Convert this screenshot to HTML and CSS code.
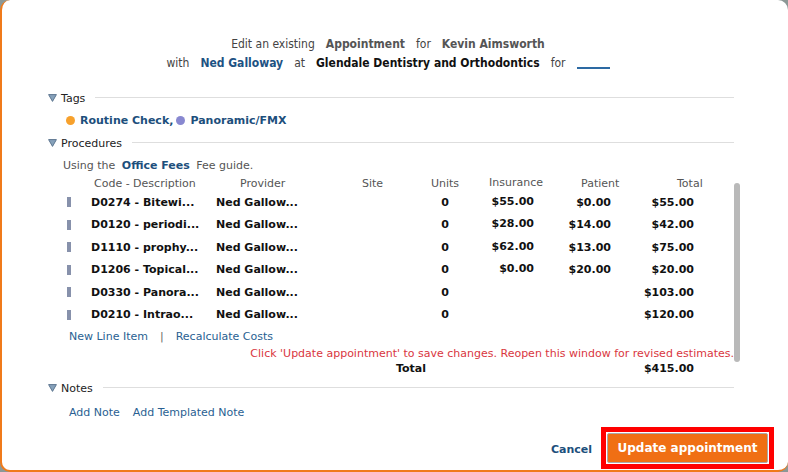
FILE: index.html
```
<!DOCTYPE html>
<html>
<head>
<meta charset="utf-8">
<link rel="stylesheet" href="styles.css">
</head>
<body>
<div class="dialog">
  <div class="title">
    <div class="tline">
      <span>Edit an existing</span>
      <span class="tb">Appointment</span>
      <span>for</span>
      <span class="tb">Kevin Aimsworth</span>
    </div>
    <div class="tline">
      <span>with</span>
      <span class="tb tlink">Ned Galloway</span>
      <span>at</span>
      <span class="tb tdark">Glendale Dentistry and Orthodontics</span>
      <span>for</span>
      <span class="blank"></span>
    </div>
  </div>

  <div class="content">
    <div class="sec-head sec-tags">
      <svg class="tri" width="9" height="8" viewBox="0 0 9 8"><polygon points="0.6,0.6 8.4,0.6 4.5,7.4" fill="#86a1ba" stroke="#5d7690" stroke-width="1" stroke-linejoin="round"/></svg>
      <span class="sec-label">Tags</span>
      <span class="rule"></span>
    </div>
    <div class="tags">
      <span class="dot orange"></span><span class="tag">Routine Check,</span>
      <span class="dot purple"></span><span class="tag">Panoramic/FMX</span>
    </div>

    <div class="sec-head sec-proc">
      <svg class="tri" width="9" height="8" viewBox="0 0 9 8"><polygon points="0.6,0.6 8.4,0.6 4.5,7.4" fill="#86a1ba" stroke="#5d7690" stroke-width="1" stroke-linejoin="round"/></svg>
      <span class="sec-label">Procedures</span>
      <span class="rule"></span>
    </div>
    <div class="using">Using the <span class="link-b">Office Fees</span> Fee guide.</div>

    <div class="grid">
      <div class="hd"></div>
      <div class="hd h-code">Code - Description</div>
      <div class="hd h-prov">Provider</div>
      <div class="hd h-site">Site</div>
      <div class="hd h-units">Units</div>
      <div class="hd h-ins">Insurance</div>
      <div class="hd h-pat">Patient</div>
      <div class="hd h-tot">Total</div>

      <div class="c"><span class="bar"></span></div><div class="c b">D0274 - Bitewi...</div><div class="c b">Ned Gallow...</div><div class="c"></div><div class="c b u">0</div><div class="c b r ins">$55.00</div><div class="c b r">$0.00</div><div class="c b r">$55.00</div>
      <div class="c"><span class="bar"></span></div><div class="c b">D0120 - periodi...</div><div class="c b">Ned Gallow...</div><div class="c"></div><div class="c b u">0</div><div class="c b r ins">$28.00</div><div class="c b r">$14.00</div><div class="c b r">$42.00</div>
      <div class="c"><span class="bar"></span></div><div class="c b">D1110 - prophy...</div><div class="c b">Ned Gallow...</div><div class="c"></div><div class="c b u">0</div><div class="c b r ins">$62.00</div><div class="c b r">$13.00</div><div class="c b r">$75.00</div>
      <div class="c"><span class="bar"></span></div><div class="c b">D1206 - Topical...</div><div class="c b">Ned Gallow...</div><div class="c"></div><div class="c b u">0</div><div class="c b r ins">$0.00</div><div class="c b r">$20.00</div><div class="c b r">$20.00</div>
      <div class="c"><span class="bar"></span></div><div class="c b">D0330 - Panora...</div><div class="c b">Ned Gallow...</div><div class="c"></div><div class="c b u">0</div><div class="c b r ins"></div><div class="c b r"></div><div class="c b r">$103.00</div>
      <div class="c"><span class="bar"></span></div><div class="c b">D0210 - Intrao...</div><div class="c b">Ned Gallow...</div><div class="c"></div><div class="c b u">0</div><div class="c b r ins"></div><div class="c b r"></div><div class="c b r">$120.00</div>
    </div>

    <div class="links"><span class="lnk">New Line Item</span><span class="sep">|</span><span class="lnk">Recalculate Costs</span></div>
    <div class="warn">Click 'Update appointment' to save changes. Reopen this window for revised estimates.</div>
    <div class="grid total-row">
      <div></div><div></div><div></div>
      <div class="b tot-label">Total</div>
      <div></div><div></div><div></div>
      <div class="b r">$415.00</div>
    </div>

    <div class="sec-head sec-notes">
      <svg class="tri" width="9" height="8" viewBox="0 0 9 8"><polygon points="0.6,0.6 8.4,0.6 4.5,7.4" fill="#86a1ba" stroke="#5d7690" stroke-width="1" stroke-linejoin="round"/></svg>
      <span class="sec-label">Notes</span>
      <span class="rule"></span>
    </div>
    <div class="notes"><span class="lnk">Add Note</span><span class="lnk">Add Templated Note</span></div>
  </div>

  <div class="footer">
    <span class="cancel">Cancel</span>
    <div class="highlight"><button class="primary">Update appointment</button></div>
  </div>

  <div class="scrollbar"></div>
</div>
</body>
</html>
```
FILE: styles.css
```
html, body {
  margin: 0;
  padding: 0;
  background: #8c9896;
}
body {
  width: 788px;
  height: 472px;
  overflow: hidden;
  font-family: "DejaVu Sans", Verdana, sans-serif;
  font-size: 11px;
  color: #222;
}
.dialog {
  position: relative;
  box-sizing: border-box;
  width: 788px;
  height: 472px;
  background: #fff;
  border-left: 2px solid #f07a1a;
  border-bottom: 2px solid #f07a1a;
  border-radius: 10px;
  display: flex;
  flex-direction: column;
}
.title {
  padding-top: 35px;
  padding-right: 14px;
  font-family: "DejaVu Sans Condensed", "DejaVu Sans", sans-serif;
  font-size: 12px;
  color: #444;
}
.tline {
  height: 19px;
  line-height: 19px;
  display: flex;
  justify-content: center;
  gap: 11px;
}
.tb { font-weight: bold; color: #555; }
.tlink { color: #1d5283; }
.tdark { color: #111; }
.blank {
  display: inline-block;
  width: 33px;
  height: 13px;
  border-bottom: 2px solid #2d6aa3;
}
.content {
  padding-left: 46px;
  padding-right: 54px;
  display: flex;
  flex-direction: column;
}
.sec-head {
  height: 16px;
  display: flex;
  align-items: center;
}
.sec-tags { margin-top: 17px; }
.sec-proc { margin-top: 7px; }
.sec-notes { margin-top: 3px; }
.tri { flex: none; margin-right: 4px; }
.sec-label { color: #222; font-size: 11px; }
.rule {
  flex: 1;
  height: 1px;
  background: #dedede;
  margin-left: 10px;
  margin-top: -1px;
}
.tags {
  margin-top: 6px;
  height: 16px;
  display: flex;
  align-items: center;
  padding-left: 18px;
}
.dot {
  width: 9px;
  height: 9px;
  border-radius: 50%;
  margin-right: 5px;
}
.orange { background: #f7a12c; }
.purple { background: #8888d0; margin-left: 3px; }
.tag { font-weight: bold; color: #1d4f7c; }
.using {
  margin-top: 7px;
  height: 16px;
  line-height: 16px;
  padding-left: 15px;
  color: #555;
}
.link-b { font-weight: bold; color: #1d4f7c; margin: 0 3px; }
.grid {
  margin-left: 15px;
  display: grid;
  grid-template-columns: 28px 125px 120px 80px 58px 66px 77px 83px;
  grid-template-rows: 17px;
  grid-auto-rows: 22.5px;
  width: 637px;
}
.hd {
  color: #555;
  padding-top: 3px;
  line-height: 14px;
  white-space: nowrap;
}
.h-code { padding-left: 3px; }
.h-prov { padding-left: 24px; }
.h-site { padding-left: 26px; }
.h-units { text-align: center; }
.h-ins { padding-left: 15px; padding-top: 2px; }
.h-pat { padding-left: 41px; }
.h-tot { padding-left: 60px; }
.c {
  display: flex;
  align-items: center;
  white-space: nowrap;
  color: #111;
}
.b { font-weight: bold; color: #111; }
.u { justify-content: center; }
.r { justify-content: flex-end; padding-right: 6px; text-align: right; }
.ins { padding-bottom: 2px; }
.bar {
  display: inline-block;
  width: 4px;
  height: 10px;
  background: #8791ab;
  margin-left: 4px;
}
.links {
  margin-top: 1px;
  height: 20px;
  line-height: 20px;
  padding-left: 21px;
  display: flex;
}
.lnk { color: #2a5f92; }
.sep { color: #666; margin: 0 12px; }
.warn {
  height: 14px;
  line-height: 14px;
  text-align: right;
  color: #d9363e;
  white-space: nowrap;
}
.total-row {
  grid-template-rows: 16px;
  grid-auto-rows: 16px;
  line-height: 16px;
}
.total-row .r { display: block; }
.tot-label { padding-left: 60px; }
.notes {
  margin-top: 9px;
  height: 16px;
  line-height: 16px;
  padding-left: 21px;
  display: flex;
  gap: 13px;
}
.footer {
  margin-top: 6px;
  display: flex;
  justify-content: flex-end;
  align-items: center;
  padding-right: 14px;
}
.cancel {
  font-weight: bold;
  color: #1d4f7c;
  margin-right: 9px;
  margin-top: 2px;
}
.highlight {
  border: 5px solid #ff0000;
  padding: 1px;
  background: #fff;
  display: flex;
}
.primary {
  width: 161px;
  height: 30px;
  background: #f06f14;
  border: 1px solid #a9a9a9;
  border-radius: 2px;
  color: #fff;
  font-family: "DejaVu Sans", Verdana, sans-serif;
  font-weight: bold;
  font-size: 12px;
  padding: 0;
}
.scrollbar {
  position: absolute;
  left: 732px;
  top: 183px;
  width: 6px;
  height: 179px;
  background: #b9b9b9;
  border-radius: 3px;
}
```
